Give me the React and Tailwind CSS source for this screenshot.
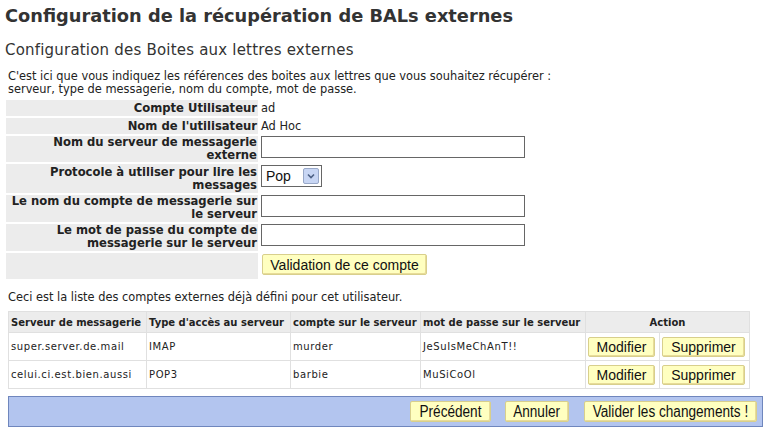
import React from "react";

const btn =
  "bg-[#ffffc0] border border-[#d8cf8c] rounded-[2px] text-[#111] leading-none shadow-[inset_-1px_-1px_0_#e8dc98] font-['Liberation_Sans',Arial,sans-serif]";

const FormRow = ({ label, children, h }) => (
  <tr>
    <td className={`bg-[#ececec] w-[252px] text-right font-bold align-top px-[1px] leading-[13px] text-[11.6px] ${h}`}>
      {label}
    </td>
    <td className="align-top pl-[1px]">{children}</td>
  </tr>
);

const accounts = [
  { server: "super.server.de.mail", type: "IMAP", user: "murder", pass: "JeSuIsMeChAnT!!" },
  { server: "celui.ci.est.bien.aussi", type: "POP3", user: "barbie", pass: "MuSiCoOl" },
];

export default function App() {
  return (
    <div className="w-[770px] h-[438px] bg-white text-[#222] font-['DejaVu_Sans',Verdana,sans-serif] text-[11px] overflow-hidden">
      <h1 className="text-[17.8px] font-bold text-[#333] pl-[5px] pt-[4px] leading-[24px]">
        Configuration de la récupération de BALs externes
      </h1>
      <h2 className="text-[15px] text-[#333] pl-[5px] mt-[12px] leading-[20px] tracking-[0.2px]">
        Configuration des Boites aux lettres externes
      </h2>
      <p className="pl-[8px] mt-[10px] leading-[13px] text-[11.4px]">
        C'est ici que vous indiquez les références des boites aux lettres que vous souhaitez récupérer :
        <br />
        serveur, type de messagerie, nom du compte, mot de passe.
      </p>

      <table className="ml-[4px] mt-[2px] border-separate border-spacing-[2px]">
        <tbody>
          <FormRow label="Compte Utilisateur" h="h-[16px] !leading-[16px]">
            <div className="leading-[16px] h-[16px] text-[11.4px]">ad</div>
          </FormRow>
          <FormRow label="Nom de l'utilisateur" h="h-[16px] !leading-[16px]">
            <div className="leading-[16px] h-[16px] text-[11.4px]">Ad Hoc</div>
          </FormRow>
          <FormRow label={<>Nom du serveur de messagerie<br />externe</>} h="h-[26px]">
            <input className="block w-[264px] h-[22px] border border-[#666] bg-white" />
          </FormRow>
          <FormRow label={<>Protocole à utiliser pour lire les<br />messages</>} h="h-[29px] pt-[2px]">
            <div className="mt-[1px] w-[61px] h-[22px] border border-[#666] flex items-center justify-between pl-[4px] pr-[2px] font-['Liberation_Sans',Arial,sans-serif] text-[14px] text-[#111]">
              <span>Pop</span>
              <span className="w-[16px] h-[16px] border border-[#98a8c8] rounded-[2px] bg-[#c8d6f4] flex items-center justify-center">
                <svg width="8" height="6" viewBox="0 0 8 6">
                  <path d="M1 1.5 L4 4.5 L7 1.5" stroke="#4d6185" strokeWidth="1.6" fill="none" />
                </svg>
              </span>
            </div>
          </FormRow>
          <FormRow label={<>Le nom du compte de messagerie sur<br />le serveur</>} h="h-[27px]">
            <input className="block w-[264px] h-[22px] border border-[#666] bg-white" />
          </FormRow>
          <FormRow label={<>Le mot de passe du compte de<br />messagerie sur le serveur</>} h="h-[27px]">
            <input className="block w-[264px] h-[22px] border border-[#666] bg-white" />
          </FormRow>
          <tr>
            <td className="bg-[#ececec] h-[26px]"></td>
            <td className="pl-[2px] align-top pt-[1px]">
              <button className={`${btn} h-[21px] w-[165px] text-[14px]`}>
                Validation de ce compte
              </button>
            </td>
          </tr>
        </tbody>
      </table>

      <p className="pl-[8px] mt-[10px] leading-[13px] text-[11.4px]">
        Ceci est la liste des comptes externes déjà défini pour cet utilisateur.
      </p>

      <table className="ml-[8px] mt-[7px] w-[742px] border-collapse border border-[#e0e0e0] text-[10px]">
        <thead>
          <tr className="bg-[#ececec] h-[21px]">
            <th className="text-left font-bold px-[2px] w-[138px] border border-[#e0e0e0]">Serveur de messagerie</th>
            <th className="text-left font-bold px-[2px] w-[144px] border border-[#e0e0e0]">Type d'accès au serveur</th>
            <th className="text-left font-bold px-[2px] w-[130px] border border-[#e0e0e0]">compte sur le serveur</th>
            <th className="text-left font-bold px-[2px] w-[165px] border border-[#e0e0e0]">mot de passe sur le serveur</th>
            <th colSpan={2} className="text-center font-bold border border-[#e0e0e0]">Action</th>
          </tr>
        </thead>
        <tbody>
          {accounts.map((a) => (
            <tr key={a.server} className="h-[28px] tracking-[0.6px]">
              <td className="px-[2px] border border-[#e0e0e0]">{a.server}</td>
              <td className="px-[2px] border border-[#e0e0e0]">{a.type}</td>
              <td className="px-[2px] border border-[#e0e0e0]">{a.user}</td>
              <td className="px-[2px] border border-[#e0e0e0]">{a.pass}</td>
              <td className="px-[2px] border border-[#e0e0e0] w-[74px]">
                <button className={`${btn} h-[20px] w-[67px] text-[14px] tracking-normal`}>
                  Modifier
                </button>
              </td>
              <td className="px-[2px] border border-[#e0e0e0]">
                <button className={`${btn} h-[20px] w-[83px] text-[14px] tracking-normal`}>
                  Supprimer
                </button>
              </td>
            </tr>
          ))}
        </tbody>
      </table>

      <div className="ml-[8px] mt-[7px] w-[755px] h-[31px] bg-[#b3c5ef] border border-[#6f86bd] flex items-center justify-end pr-[5px] text-[16px]">
        <button className={`${btn} h-[21px] w-[81px] flex items-center justify-center`}>
          <span className="inline-block scale-x-[0.85]">Précédent</span>
        </button>
        <button className={`${btn} h-[21px] w-[64px] ml-[14px] flex items-center justify-center`}>
          <span className="inline-block scale-x-[0.85]">Annuler</span>
        </button>
        <button className={`${btn} h-[21px] w-[173px] ml-[15px] flex items-center justify-center`}>
          <span className="inline-block scale-x-[0.85] whitespace-nowrap">Valider les changements !</span>
        </button>
      </div>
    </div>
  );
}
